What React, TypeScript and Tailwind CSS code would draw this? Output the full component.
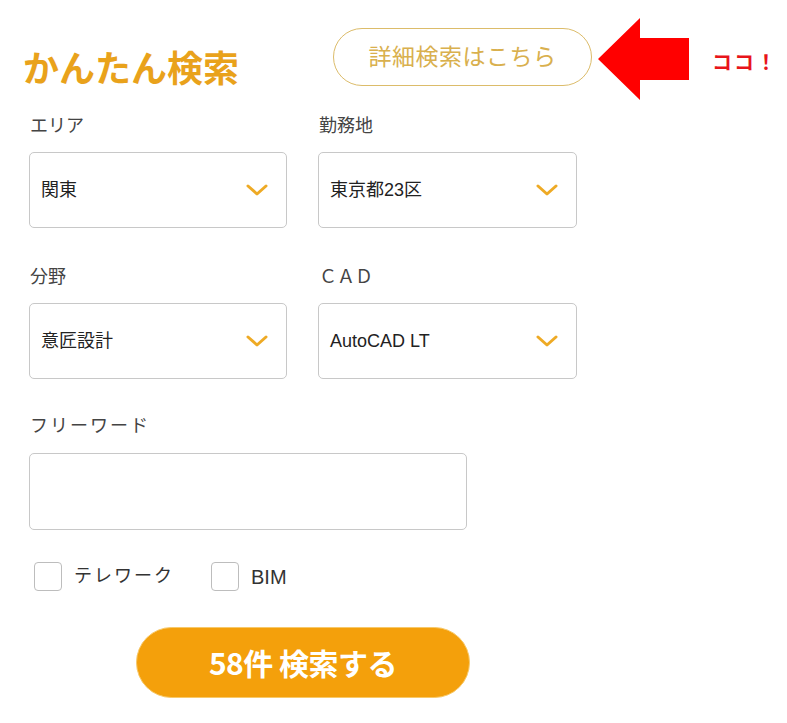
const jp = "font-['Liberation_Sans','Noto_Sans_CJK_JP',sans-serif]";

const Chevron: React.FC = () => (
  <svg width="22" height="13" viewBox="0 0 22 13" className="shrink-0">
    <polyline points="2,2 11,10 20,2" fill="none" stroke="#eeaa25" strokeWidth="3" strokeLinecap="round" strokeLinejoin="round" />
  </svg>
);

const SelectBox: React.FC<{ label: string; value: string }> = ({ label, value }) => (
  <div className="flex flex-col">
    <label className="text-[18px] leading-[27px] text-[#444] ml-[1px] mt-[1px]">{label}</label>
    <div className="mt-[12px] h-[76px] border border-[#c8c8c8] rounded-[5px] flex items-center justify-between pl-[11px] pr-[18px] bg-white">
      <span className="text-[18px] text-[#222]">{value}</span>
      <Chevron />
    </div>
  </div>
);

const Check: React.FC<{ label: string; wide?: boolean }> = ({ label, wide }) => (
  <label className="flex items-center gap-[12px] h-[29px]">
    <span className="w-[28px] h-[29px] border border-[#bdbdbd] rounded-[4px] bg-white" />
    <span className={wide ? "text-[18px] text-[#333] tracking-[2px]" : "text-[20px] text-[#333]"}>{label}</span>
  </label>
);

export default function App() {
  return (
    <div className={`${jp} w-[787px] h-[723px] bg-white overflow-hidden`}>
      {/* header */}
      <div className="flex items-center h-[82px] mt-[18px]">
        <div className="w-[333px] pl-[23px] pt-[14px]">
          <h1 className="text-[36px] leading-none font-bold text-[#e9a21b] font-['Noto_Sans_CJK_JP',sans-serif]">かんたん検索</h1>
        </div>
        <button className="w-[259px] h-[58px] mb-[4px] rounded-full border border-[#dcbc6a] text-[23px] text-[#d9b04e] tracking-[0.5px]">
          詳細検索はこちら
        </button>
        <svg width="91" height="82" viewBox="0 0 91 82" className="ml-[6px]">
          <polygon points="0,41 42,0 42,20 91,20 91,62 42,62 42,82" fill="#ff0000" />
        </svg>
        <span className="ml-[23px] mt-[6px] text-[20px] font-bold text-[#e8141a] tracking-[2px] font-['Noto_Sans_CJK_JP',sans-serif]">ココ！</span>
      </div>

      <div className="pl-[29px] mt-[12px]">
        <div className="grid grid-cols-[258px_259px] gap-x-[31px] gap-y-[35px]">
          <SelectBox label="エリア" value="関東" />
          <SelectBox label="勤務地" value="東京都23区" />
          <SelectBox label="分野" value="意匠設計" />
          <SelectBox label="ＣＡＤ" value="AutoCAD LT" />
        </div>

        <div className="mt-[33px] flex flex-col">
          <label className="text-[18px] leading-[27px] text-[#444] ml-[1px] mt-[1px] tracking-[2px]">フリーワード</label>
          <input className="mt-[13px] w-[438px] h-[77px] border border-[#c8c8c8] rounded-[5px] outline-none px-3" />
        </div>

        <div className="mt-[32px] ml-[5px] flex items-center gap-[37px]">
          <Check label="テレワーク" wide />
          <Check label="BIM" />
        </div>

        <button className="block mt-[36px] ml-[107px] w-[334px] h-[71px] rounded-full bg-[#f4a00b] border border-[#f7c96a] text-white text-[30px] font-bold font-['Noto_Sans_CJK_JP',sans-serif] tracking-[-0.5px]">
          58件 検索する
        </button>
      </div>
    </div>
  );
}
